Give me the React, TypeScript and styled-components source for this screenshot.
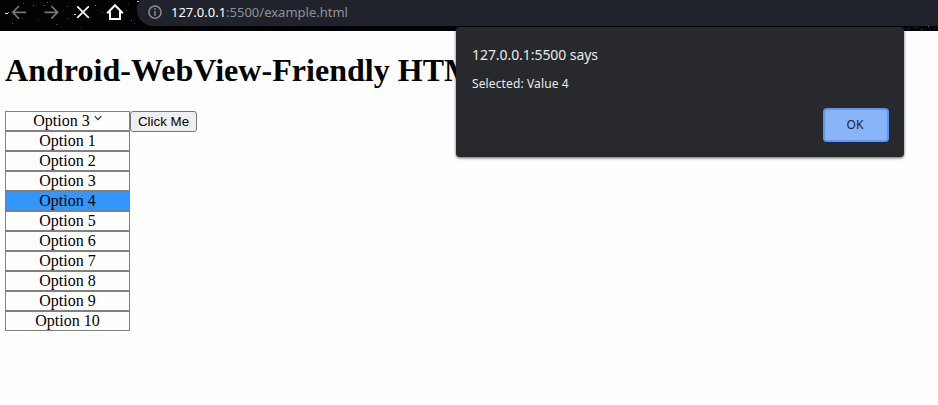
import React from "react";
import styled, { createGlobalStyle } from "styled-components";

const GlobalStyle = createGlobalStyle`
  html, body { margin: 0; height: 100%; overflow: hidden; background: #fefefe; }
  #root { height: 100%; }
`;

const Browser = styled.div`
  position: relative;
  height: 405px;
  display: flex;
  flex-direction: column;
  overflow: hidden;
  color: #000;
  font-family: "Liberation Serif", "Times New Roman", serif;
`;

const Toolbar = styled.header`
  position: relative;
  flex: none;
  height: 31px;
  display: flex;
  align-items: flex-start;
  background: #020204;
`;

const Stars = styled.svg`
  position: absolute;
  inset: 0;
`;

const NavButtons = styled.nav`
  position: relative;
  display: flex;
  width: 137px;
  flex: none;
  height: 26px;
`;

const NavIcons = styled.svg`
  display: block;
`;

const AddressBar = styled.div`
  position: relative;
  flex: 1;
  height: 32px;
  margin-top: -6px;
  box-sizing: border-box;
  padding: 6px 0 0 11px;
  display: flex;
  align-items: flex-start;
  border-radius: 16px 0 0 16px;
  background: #20232b;
`;

const Url = styled.span`
  margin: 3px 0 0 9px;
  color: #8f9296;
  font: 13px/19px "Noto Sans", sans-serif;
  letter-spacing: 0;
  white-space: nowrap;
`;

const Host = styled.span`
  color: #fff;
`;

const Page = styled.main`
  padding: 21px 5px 0;
`;

const Title = styled.h1`
  margin: 0 0 22px;
  font-size: 32px;
  line-height: 37px;
  letter-spacing: 0.03px;
  white-space: nowrap;
`;

const Controls = styled.div`
  display: flex;
  align-items: flex-start;
`;

const OptionList = styled.div`
  width: 125px;
`;

const OptionRow = styled.div<{ $selected?: boolean }>`
  box-sizing: border-box;
  height: 20px;
  border: 1px solid #808080;
  background: ${(p) => (p.$selected ? "#3296fc" : "#fefefe")};
  font-size: 16px;
  line-height: 18px;
  display: flex;
  justify-content: center;
  gap: 4px;
  white-space: nowrap;
`;

const Caret = styled.svg`
  margin-top: 3px;
`;

const PageButton = styled.button`
  box-sizing: border-box;
  width: 67px;
  height: 21px;
  padding: 0;
  border: 1px solid #767676;
  border-radius: 3px;
  background: #efefef;
  color: #000;
  font: 13.333px/18px "Liberation Sans", Arial, sans-serif;
`;

const Dialog = styled.section`
  position: absolute;
  left: 456px;
  top: 27px;
  width: 448px;
  height: 130px;
  box-sizing: border-box;
  padding: 18px 15px 15px 16px;
  display: flex;
  flex-direction: column;
  border-radius: 4px;
  background: #28292c;
  box-shadow: 0 1px 3px rgba(0, 0, 0, 0.65);
  color: #e8eaed;
  font-family: "Noto Sans", sans-serif;
`;

const DialogTitle = styled.div`
  font-size: 14px;
  line-height: 20px;
  letter-spacing: -0.06px;
`;

const Message = styled.div`
  margin-top: 10px;
  font-size: 12px;
  line-height: 18px;
  letter-spacing: 0.12px;
`;

const OkButton = styled.button`
  box-sizing: border-box;
  width: 66px;
  height: 34px;
  margin-top: auto;
  align-self: flex-end;
  padding: 0 2px 1px 0;
  border: 2px solid #5b96f3;
  border-radius: 4px;
  background: #8ab4f8;
  color: #202124;
  font: 12px/18px "Noto Sans", sans-serif;
`;

const stars = [
  [5, 13, 3, "#eee"], [8, 12, 1, "#999"], [12, 23, 1, "#755"], [23, 3, 1, "#334"],
  [33, 5, 1, "#667"], [43, 5, 2, "#444"], [47, 2, 1, "#556"], [56, 24, 2, "#622b3c"],
  [67, 6, 1, "#455"], [74, 14, 2, "#ccc"], [68, 18, 1, "#445"], [95, 5, 1, "#875"],
  [90, 17, 1, "#334"], [102, 12, 1, "#645"], [126, 10, 1, "#667"], [131, 20, 1, "#556"],
  [137, 1, 2, "#aaa"], [134, 23, 1, "#434"], [22, 18, 1, "#333"], [80, 27, 1, "#223"],
  [908, 28, 1, "#445"], [915, 27, 2, "#334"], [921, 29, 1, "#556"], [928, 26, 1, "#667"],
  [934, 28, 1, "#334"], [128, 3, 1, "#334"], [63, 10, 1, "#333"], [38, 19, 1, "#333"],
] as const;

const options = Array.from({ length: 10 }, (_, i) => i + 1);

export default function App() {
  return (
    <Browser>
      <GlobalStyle />
      <Toolbar>
        <Stars width="938" height="31" aria-hidden="true">
          {stars.map(([x, y, w, fill]) => (
            <rect key={`${x}-${y}`} x={x} y={y} width={w} height="1" fill={fill} />
          ))}
        </Stars>
        <NavButtons aria-label="Navigation">
          <NavIcons width="137" height="26" fill="none" stroke="#777" strokeWidth="1.7">
            <path d="M26 12.3H13M19 6l-6.3 6.3L19 18.6" />
            <path d="M44.5 12.3h13M51.3 6l6.3 6.3-6.3 6.3" />
            <path stroke="#f4f4f4" d="M77.2 6.3l11.6 11.6M88.8 6.3L77.2 17.9" />
            <path stroke="#fff" strokeWidth="2" d="M107.2 13.2L115 5.2l7.8 8M110 11.5v7.6h10v-7.6" />
          </NavIcons>
        </NavButtons>
        <AddressBar>
          <svg width="14" height="26" fill="none" stroke="#8a8c91" strokeWidth="1.5">
            <circle cx="7" cy="12.2" r="6.1" />
            <path d="M7 11v4.7M7 8.3v1.7" />
          </svg>
          <Url><Host>127.0.0.1</Host>:5500/example.html</Url>
        </AddressBar>
      </Toolbar>
      <Page>
        <Title>Android-WebView-Friendly HTML</Title>
        <Controls>
          <OptionList>
            <OptionRow>
              Option 3
              <Caret width="8" height="8" fill="none" stroke="#222" strokeWidth="1.1">
                <path d="M.7 1.2L4 4.7l3.3-3.5" />
              </Caret>
            </OptionRow>
            {options.map((n) => (
              <OptionRow key={n} $selected={n === 4}>Option {n}</OptionRow>
            ))}
          </OptionList>
          <PageButton>Click Me</PageButton>
        </Controls>
      </Page>
      <Dialog role="alertdialog">
        <DialogTitle>127.0.0.1:5500 says</DialogTitle>
        <Message>Selected: Value 4</Message>
        <OkButton>OK</OkButton>
      </Dialog>
    </Browser>
  );
}
